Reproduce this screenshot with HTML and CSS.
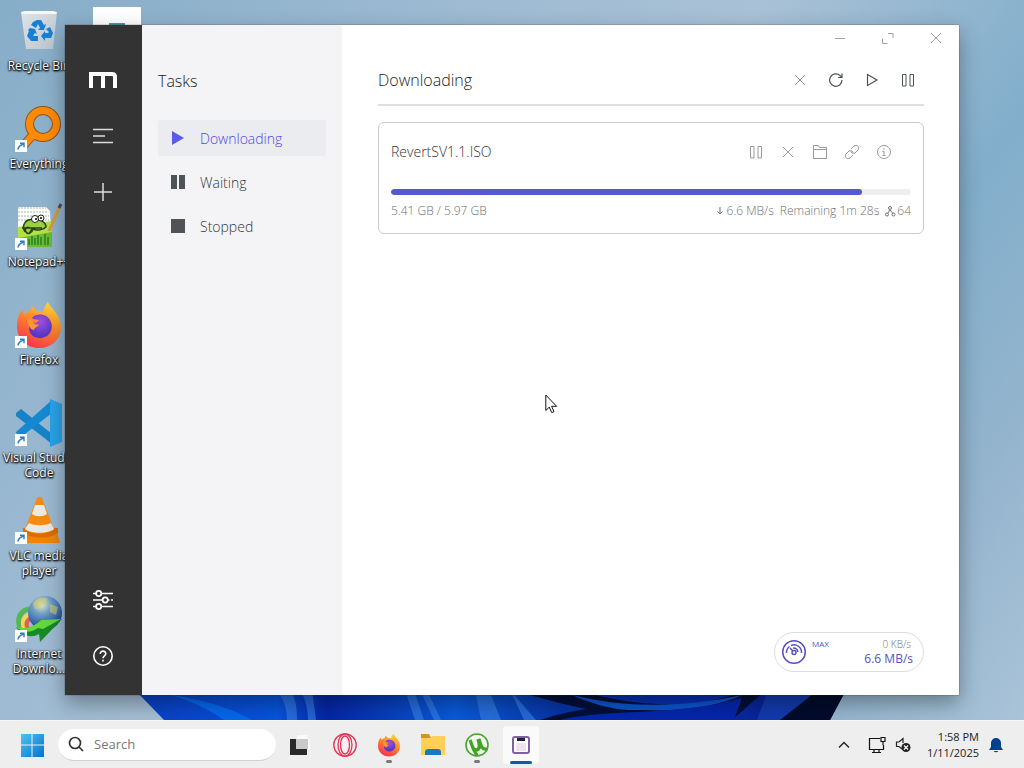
FILE: index.html
```html
<!DOCTYPE html>
<html lang="en">
<head>
<meta charset="utf-8">
<meta name="viewport" content="width=device-width, initial-scale=1">
<title>Downloading</title>
<link rel="stylesheet" href="styles.css">
</head>
<body>
<svg class="defs" aria-hidden="true">
  <defs>
    <linearGradient id="fire" x1="0.8" y1="0" x2="0.3" y2="1"><stop offset="0" stop-color="#ffe13d"/><stop offset=".45" stop-color="#ff8a2a"/><stop offset="1" stop-color="#f5314f"/></linearGradient>
    <radialGradient id="violet" cx=".5" cy=".3" r=".7"><stop offset="0" stop-color="#a44fe0"/><stop offset="1" stop-color="#4b35c0"/></radialGradient>
    <linearGradient id="win" x1="0" y1="0" x2="1" y2="1"><stop offset="0" stop-color="#4cc5f2"/><stop offset="1" stop-color="#0671cb"/></linearGradient>
    <linearGradient id="glass" x1="0" y1="0" x2="1" y2="1"><stop offset="0" stop-color="#dfe5e9"/><stop offset="1" stop-color="#b9c4cc"/></linearGradient>
    <radialGradient id="globe" cx=".4" cy=".25" r=".8"><stop offset="0" stop-color="#e6ecc0"/><stop offset=".35" stop-color="#6f9fc9"/><stop offset="1" stop-color="#123a86"/></radialGradient>
    <linearGradient id="bloomA" x1="0" x2="1"><stop offset="0" stop-color="#0a3fc4"/><stop offset=".2" stop-color="#0654dc"/><stop offset=".27" stop-color="#0526a4"/><stop offset=".45" stop-color="#0a5ad9"/><stop offset=".6" stop-color="#0634a6"/><stop offset=".8" stop-color="#0a2bb5"/><stop offset="1" stop-color="#061c6b"/></linearGradient>
    <symbol id="shortcut" viewBox="0 0 12 12"><path fill="#fff" d="M0 0h12v12H0z"/><path d="M3 9.500C3 7 4.500 5.500 8.500 4M5 3.200h4v4" fill="none" stroke="#2f7cb8" stroke-width="1.400"/></symbol>
    <symbol id="firefox" viewBox="0 0 48 48"><path fill="url(#fire)" d="M5 12l3-3 1 5c2-2 4-4 6-4l2-5 5 5c2 0 4 0 6 1 1-3 2-7 5-10 2 6 13 12 13 25 0 13-10 21-22 21S2 38 2 26c0-6 1-10 3-14z"/><path fill="url(#violet)" d="M17 17c3-5 14-5 18 2 5 9-1 18-10 18-7 0-11-5-11-10 0-3 1-5 3-6l4 1 3-3c-3 0-5-1-7-2z"/><path fill="#ff9435" d="M12 19c3-2 6 0 7 3 1 2 4 1 5 2-2 2-4 2-5 5-3 0-6-4-7-10z"/></symbol>
    <symbol id="close" viewBox="0 0 16 16"><path d="M3 3l10 10M13 3L3 13" fill="none" stroke="currentColor"/></symbol>
    <symbol id="pause" viewBox="0 0 16 16"><path d="M2.500 2.500h3.500v11.500H2.500zM10 2.500h3.500v11.500H10z" fill="none" stroke="currentColor"/></symbol>
  </defs>
</svg>
<div class="screen">
  <main class="desktop">
    <svg class="wallpaper" viewBox="0 0 1024 30" preserveAspectRatio="none" aria-hidden="true">
      <path fill="url(#bloomA)" d="M135 0h711l-16 30H164z"/>
      <path fill="#0568ec" d="M172 5c30 5 58 12 80 25h-28c-15-10-30-18-52-25z"/>
      <path fill="#3b82e8" d="M277 0h14c5 10 6 20 6 30h-10c0-12-4-22-10-30zM300 0h12l4 30h-8c0-12-3-22-8-30zM405 0h9l10 30h-9zM420 0h7l14 30h-7zM475 0h14l12 30h-20zM510 0l26 30h-12z" opacity=".6"/>
      <path fill="#021038" d="M512 0h66c52 16 115 22 170 0h18l-34 30H540c15-5 28-8 46-11-25-5-44-11-74-19z"/>
      <path fill="#0b55cf" d="M572 5c55 14 115 12 170 0-40 18-80 15-110 15-20 0-45-8-60-15z"/>
      <path fill="#0526ad" d="M560 30c45-12 115-3 182-22l-8 22z"/>
      <path fill="#123aad" d="M768 0h55l-38 30h-28z"/>
      <path fill="#020b2c" d="M818 0h28l-16 30h-50z"/>
    </svg>

    <ul class="shortcuts">
      <li class="shortcut">
        <svg viewBox="0 0 48 48"><path fill="url(#glass)" d="M6 5h36l-4 37H11z"/><path fill="#f5f7f8" d="M6 5l4-1h28l4 1-1 2H7z"/><g fill="#1680d8"><path d="M18 15l4-2h4l3 5 2-1-2 6h-6l2-2-2-4-2 4-5-3zM31 22l4-2 3 6-2 5h-6v3l-4-5 4-5v2h3l1-1zM15 21l5 1 2 5-2-1-2 3h5v5h-7l-4-5 2-5-1-1z"/></g></svg>
        <span>Recycle Bin</span>
      </li>
      <li class="shortcut">
        <svg viewBox="0 0 48 48"><path d="M18 30L7 42" stroke="#8f5416" stroke-width="9"/><circle cx="28" cy="19" r="13.500" fill="none" stroke="#8f5416" stroke-width="9"/><path d="M20 28L7 42" stroke="#ff8a08" stroke-width="7"/><circle cx="28" cy="19" r="13.500" fill="none" stroke="#ff8a08" stroke-width="7"/><use href="#shortcut" y="35" width="12" height="12"/></svg>
        <span>Everything</span>
      </li>
      <li class="shortcut">
        <svg viewBox="0 0 48 48"><path fill="#fbfcf5" d="M3 4h28l4 4 2 36H3z"/><path fill="#b5e04a" d="M3 24l33-6 1 26H3z"/><path fill="#6dbb2f" d="M3 35l34-6v15H3z"/><path d="M3 5h28M3 9h30M3 13h31M3 17h31" stroke="#a7b8c4" stroke-dasharray="2 1"/><path d="M10 29c-4-7 1-14 9-12 5-2 12 2 12 7-3 3-9 4-13 2-1 4-5 6-7 3s1-6 4-4M7 25h20M14 31l3-5" fill="#9bd13b" stroke="#26431a" stroke-width="1.500"/><circle cx="20" cy="16" r="3.500" fill="#fff" stroke="#222"/><circle cx="26" cy="15" r="3" fill="#fff" stroke="#222"/><circle cx="21" cy="16" r="1"/><circle cx="26" cy="15" r="1"/><path d="M14 42v-6M17 42v-9M20 42v-7M23 42V32M26 42v-8M30 42V31M33 42v-8" fill="none" stroke="#24822a" stroke-width="1.500"/><path d="M34 28L45 3" stroke="#d79b38" stroke-width="3"/><path d="M44 5l2-4" stroke="#474c63" stroke-width="3"/><use href="#shortcut" y="35" width="12" height="12"/></svg>
        <span>Notepad++</span>
      </li>
      <li class="shortcut">
        <svg viewBox="0 0 48 48"><use href="#firefox" width="48" height="48"/><use href="#shortcut" y="35" width="12" height="12"/></svg>
        <span>Firefox</span>
      </li>
      <li class="shortcut">
        <svg viewBox="0 0 48 48"><path fill="#1683c9" d="M1 14l5-4 31 25v10L1 17z"/><path fill="#1489d2" d="M1 33l36-32v13L6 38l-5-4z"/><path fill="#29a3e8" d="M35 0l12 5v38l-12 5z"/><use href="#shortcut" y="35" width="12" height="12"/></svg>
        <span>Visual Studio Code</span>
      </li>
      <li class="shortcut">
        <svg viewBox="0 0 48 48"><path fill="#f08408" d="M7 35h35l3 11H8z"/><path fill="#d96e02" d="M8 31h35v5c-9 6-25 6-35 0z"/><path fill="#f58b14" d="M22 1c1-2 4-2 5 0l12 31c-5 6-24 6-29 0z"/><path fill="#e9e9e6" d="M20 8h9l3 9c-4 3-11 3-15 0zM14 26c6 3 15 3 22 0l3 6c-6 5-23 5-29 0z"/><use href="#shortcut" y="35" width="12" height="12"/></svg>
        <span>VLC media player</span>
      </li>
      <li class="shortcut">
        <svg viewBox="0 0 48 48"><path d="M5 33c-5-14 6-22 15-18" fill="none" stroke="#53b94b" stroke-width="5"/><path d="M9 33c-4-10 4-16 12-13" fill="none" stroke="#f4d45c" stroke-width="4"/><path d="M13 34c-4-7 1-12 9-11" fill="none" stroke="#e85a4f" stroke-width="4"/><circle cx="30" cy="18" r="17" fill="url(#globe)"/><path fill="#d4c96b" d="M18 8c5-6 11-6 15-4-3 3-1 5-5 6s-3 5-8 4zM35 9l8 3-2 8-6-3z" opacity=".6"/><path fill="#168b25" d="M1 32c10 4 18 0 24-7l22-1-22 23-1-8c-9 5-17 1-23-7z"/><path fill="#65d83d" d="M1 32c12 3 20-2 25-7l20-1-18 10-5-1c-7 5-15 5-22-1z"/><use href="#shortcut" y="35" width="12" height="12"/></svg>
        <span>Internet Downlo...</span>
      </li>
      <li class="shortcut document">
        <svg viewBox="0 0 48 48"><path fill="#fff" d="M0 0h48v48H0z"/><path fill="#3f9bab" d="M16 16h16v14H16z"/></svg>
      </li>
    </ul>

    <section class="window" aria-label="Download manager">
      <nav class="rail" aria-label="Main">
        <a class="rail-item" href="#" aria-label="Home"><svg width="28" height="16" viewBox="0 0 28 16"><path fill="none" stroke="#fff" stroke-width="4" d="M2 16V2M0 2h23q3 0 3 3v11M14 2v14"/></svg></a>
        <button class="rail-item" aria-label="Tasks"><svg width="20" height="20" viewBox="0 0 20 20"><path fill="none" stroke="#ddd" stroke-width="1.500" d="M0 3.500h20M0 10h12M0 16.500h20"/></svg></button>
        <button class="rail-item" aria-label="Add task"><svg width="20" height="20" viewBox="0 0 20 20"><path fill="none" stroke="#ddd" stroke-width="1.500" d="M1 10h18M10 1v18"/></svg></button>
        <button class="rail-item rail-end" aria-label="Preferences"><svg width="20" height="20" viewBox="0 0 20 20"><g fill="none" stroke="#fff" stroke-width="1.700"><path d="M0 3.500h3M8.500 3.500H20M0 10h9.500M15 10h1.500M18 10h2M0 16.500h3M8.500 16.500H20"/><circle cx="5.700" cy="3.500" r="2.600"/><circle cx="12.200" cy="10" r="2.600"/><circle cx="5.700" cy="16.500" r="2.600"/></g></svg></button>
        <button class="rail-item" aria-label="Help"><svg width="20" height="20" viewBox="0 0 20 20"><g fill="none" stroke="#fff" stroke-width="1.600"><circle cx="10" cy="10" r="9.200"/><path d="M7.200 8c0-4 5.800-3.500 5.600-.2C12.700 10 10 9.700 10 12.300M10 13.800v1.700"/></g></svg></button>
      </nav>

      <aside class="tasks">
        <h2 class="heading">Tasks</h2>
        <nav class="task-nav" aria-label="Tasks">
          <a class="task-link active" href="#"><svg width="14" height="14" viewBox="0 0 14 14"><path fill="currentColor" d="M1 0l12 7-12 7z"/></svg>Downloading</a>
          <a class="task-link" href="#"><svg width="14" height="14" viewBox="0 0 14 14"><path fill="currentColor" d="M0 0h6v14H0zM8 0h6v14H8z"/></svg>Waiting</a>
          <a class="task-link" href="#"><svg width="14" height="14" viewBox="0 0 14 14"><path fill="currentColor" d="M0 0h14v14H0z"/></svg>Stopped</a>
        </nav>
      </aside>

      <div class="content">
        <div class="window-controls">
          <button aria-label="Minimize"><svg width="16" height="16" viewBox="0 0 16 16"><path stroke="currentColor" d="M3 8.500h10"/></svg></button>
          <button aria-label="Maximize"><svg width="16" height="16" viewBox="0 0 16 16"><path fill="none" stroke="currentColor" d="M8 3.500h5V8M2.500 8.500v5h5"/></svg></button>
          <button aria-label="Close"><svg width="16" height="16"><use href="#close"/></svg></button>
        </div>
        <header class="content-head">
          <h1 class="heading">Downloading</h1>
          <div class="toolbar">
            <button class="muted" aria-label="Delete selected"><svg width="16" height="16"><use href="#close"/></svg></button>
            <button aria-label="Refresh"><svg width="16" height="16" viewBox="0 0 16 16"><path fill="none" stroke="currentColor" stroke-width="1.200" d="M14 8a6.200 6.200 0 1 1-2-4.500l1.700 1.700M14 1.500v4h-4"/></svg></button>
            <button aria-label="Resume all"><svg width="16" height="16" viewBox="0 0 16 16"><path fill="none" stroke="currentColor" stroke-width="1.200" d="M3.500 2.500l9.500 5.500-9.500 5.500z"/></svg></button>
            <button aria-label="Pause all"><svg width="16" height="16"><use href="#pause"/></svg></button>
          </div>
        </header>

        <article class="card">
          <div class="card-top">
            <h3 class="file-name">RevertSV1.1.ISO</h3>
            <div class="card-actions">
              <button aria-label="Pause"><svg width="16" height="16"><use href="#pause"/></svg></button>
              <button aria-label="Delete"><svg width="16" height="16"><use href="#close"/></svg></button>
              <button aria-label="Open folder"><svg width="16" height="16" viewBox="0 0 16 16"><path fill="none" stroke="currentColor" d="M1.500 14.500v-13h5l1 2h7v11zM1.500 5.500h13"/></svg></button>
              <button aria-label="Copy link"><svg width="16" height="16" viewBox="0 0 16 16"><path fill="none" stroke="currentColor" d="M7 5l3-3c3-2 6 1 4 4l-3 3c-2 1-4 0-4-2M9 11l-3 3c-3 2-6-1-4-4l3-3c2-1 4 0 4 2"/></svg></button>
              <button aria-label="Information"><svg width="16" height="16" viewBox="0 0 16 16"><g fill="none" stroke="currentColor"><circle cx="8" cy="8" r="6.500"/><path d="M8 4v1.500M8 7v5M6.500 7.500H8M6.500 11.500h3"/></g></svg></button>
            </div>
          </div>
          <div class="progress" role="progressbar" aria-label="RevertSV1.1.ISO" aria-valuenow="91" aria-valuemin="0" aria-valuemax="100"><div class="progress-fill" style="width:90.6%"></div></div>
          <div class="stats">
            <span>5.41 GB / 5.97 GB</span>
            <div class="stats-live">
              <span class="stat"><svg width="8" height="10" viewBox="0 0 8 10"><path fill="none" stroke="currentColor" d="M4 1v7M1.500 5.500L4 8l2.500-2.500"/></svg>6.6 MB/s</span>
              <span>Remaining 1m 28s</span>
              <span class="stat connections"><svg width="11" height="11" viewBox="0 0 11 11"><g fill="none" stroke="currentColor"><circle cx="5" cy="2" r="1.500"/><circle cx="2" cy="8.500" r="1.500"/><circle cx="8.500" cy="8.500" r="1.500"/><path d="M5 3.500L3 7M5 4l3 3.500"/></g></svg>64</span>
            </div>
          </div>
        </article>

        <div class="speed">
          <svg width="26" height="26" viewBox="0 0 26 26"><g fill="none" stroke="currentColor" stroke-width="1.500"><circle cx="13" cy="13" r="11.300"/><path d="M5.500 14a7.500 7.500 0 0 1 3-6.500M10 6.500a7.500 7.500 0 0 1 10.500 7.500M9 9l3 3M12 9a5 5 0 0 1 5 4"/><circle cx="13" cy="13.500" r="2"/></g></svg>
          <span class="speed-mode">MAX</span>
          <div class="speed-values"><span class="up">0 KB/s</span><span class="down">6.6 MB/s</span></div>
        </div>
      </div>
    </section>
    <svg class="cursor" width="13" height="20" viewBox="0 0 13 20" aria-hidden="true"><path fill="#fff" stroke="#111" d="M.8 1v15.500l3.500-3.400 2.400 5.500 2.300-1-2.400-5.300h5z"/></svg>
  </main>

  <footer class="taskbar">
    <div class="taskbar-start">
      <button class="start" aria-label="Start"><svg width="24" height="24" viewBox="0 0 24 24"><path fill="url(#win)" d="M1 1h10.500v10.500H1zM12.500 1H24v10.500H12.500zM1 12.500h10.500V24H1zM12.500 12.500H24V24H12.500z"/></svg></button>
      <label class="search"><svg width="16" height="16" viewBox="0 0 16 16"><g fill="none" stroke="#333" stroke-width="1.700"><circle cx="7" cy="7" r="5.500"/><path d="M11 11l4 4"/></g></svg><input type="search" placeholder="Search" aria-label="Search"></label>
      <div class="apps">
        <button class="app" aria-label="Task view"><svg width="24" height="24" viewBox="0 0 24 24"><path fill="#fafafa" d="M8 2h11v4h2v10h-3V6H8z"/><path fill="#292929" d="M1 6h17v16H1z"/><path fill="#c9c9c9" d="M7 6h12v10H7z"/></svg></button>
        <button class="app" aria-label="Opera"><svg width="24" height="24" viewBox="0 0 24 24"><g fill="#fbeef1" stroke="#df3354" stroke-width="1.300"><circle cx="12" cy="12" r="11.200"/><ellipse cx="12" cy="12" rx="7" ry="11"/><ellipse cx="12" cy="12" rx="4.500" ry="9"/></g></svg></button>
        <button class="app running" aria-label="Firefox"><svg width="24" height="24"><use href="#firefox"/></svg></button>
        <button class="app" aria-label="File Explorer"><svg width="24" height="24" viewBox="0 0 24 24"><path fill="#d59419" d="M0 1h8l2 4H0z"/><path fill="#ffcf58" d="M0 5h9l3-2h12v19H0z"/><path fill="#137bc4" d="M4 22v-3q0-3 3-3h10q3 0 3 3v3z"/></svg></button>
        <button class="app running" aria-label="uTorrent"><svg width="24" height="24" viewBox="0 0 24 24"><circle cx="12" cy="12" r="11" fill="#f2f9ed" stroke="#48a42c" stroke-width="1.600"/><path fill="none" stroke="#42a325" stroke-width="3.300" d="M5 7c2 4 2 10 6 10 4 0 4-5 2-11M14 6c2 6 2 11 8 10M8 15c1 3 3 5 4 8"/></svg></button>
        <button class="app current" aria-label="Download manager"><svg width="24" height="24" viewBox="0 0 24 24"><rect x="4" y="4" width="16" height="16" rx="2" fill="#fff" stroke="#8060a5" stroke-width="2"/><path fill="#25202f" d="M8 5h8v3H8z"/><path fill="#eee2ef" d="M7 10h10v8H7z"/></svg></button>
      </div>
    </div>
    <div class="tray">
      <button class="tray-item" aria-label="Show hidden icons"><svg width="12" height="12" viewBox="0 0 12 12"><path fill="none" stroke="#222" stroke-width="1.400" d="M1 8.500l5-5 5 5"/></svg></button>
      <button class="tray-item" aria-label="Network"><svg width="18" height="18" viewBox="0 0 18 18"><path fill="none" stroke="#111" stroke-width="1.200" d="M12 2.500H1.500v11h14V9M6 13.500V16M11 13.500V16M4 16.500h9M13 1.500h4v4h-4zM15 5.500V9"/></svg></button>
      <button class="tray-item" aria-label="Volume muted"><svg width="16" height="16" viewBox="0 0 16 16"><path fill="none" stroke="#222" stroke-width="1.200" d="M7 12L4 9.500H1.500V5H4l4-3.500V6"/><circle cx="11" cy="10.500" r="4.500" fill="#222"/><path stroke="#fff" stroke-width="1.200" d="M9 8.500l4 4M13 8.500l-4 4"/></svg></button>
      <time class="clock" datetime="2025-01-11T13:58">1:58 PM<br>1/11/2025</time>
      <button class="tray-item" aria-label="Notifications"><svg width="16" height="16" viewBox="0 0 16 16"><path fill="#003f92" d="M3 6a5 5 0 0 1 10 0v4l2 3H1l2-3zM5.500 14h5q-2.500 2.500-5 0z"/></svg></button>
    </div>
  </footer>
</div>
</body>
</html>
```
FILE: styles.css
```css
* { box-sizing: border-box; }
body { margin: 0; font-family: "Open Sans", "Noto Sans", sans-serif; font-size: 14px; font-weight: 300; color: #222; }
button { padding: 0; border: 0; background: none; font: inherit; color: inherit; display: grid; place-items: center; }
a { color: inherit; text-decoration: none; }
h1, h2, h3, ul { margin: 0; padding: 0; font-weight: 300; }
svg { display: block; flex: none; }
.defs { position: absolute; width: 0; height: 0; }

.screen { height: 100vh; display: grid; grid-template-rows: 1fr 48px; }
.desktop { position: relative; overflow: hidden; background: linear-gradient(125deg, #86adc8 0%, #9dbad2 30%, #a9c1d6 50%, #82aecb 72%, #94b4cd 86%, #a9c3d8 100%); }
.wallpaper { position: absolute; left: 0; bottom: 0; width: 100%; height: 30px; }

.shortcuts { list-style: none; height: 100%; width: 156px; display: grid; grid-template-rows: repeat(7, 98px); grid-template-columns: 78px 78px; grid-auto-flow: column; }
.shortcut { padding-top: 7px; display: flex; flex-direction: column; align-items: center; gap: 3px; color: #fff; font-size: 12px; font-weight: 400; line-height: 15px; text-align: center; text-shadow: 0 1px 2px #000, 1px 1px 2px #000, 0 0 2px #000; }
.shortcut svg { width: 48px; height: 48px; }

.window { position: absolute; inset: 25px 65px; display: grid; grid-template-columns: 77px 200px 1fr; background: #fff; box-shadow: 0 0 1px #333, 0 8px 20px rgba(0, 0, 0, .35); }
.rail { background: #333; padding: 27px 1px 11px 0; display: flex; flex-direction: column; }
.rail-item { height: 56px; display: grid; place-items: center; }
.rail-end { margin-top: auto; }

.heading { font-size: 16px; line-height: 24px; }
.tasks { background: #f4f4f6; padding: 44px 16px; }
.task-nav { margin-top: 27px; display: flex; flex-direction: column; gap: 8px; }
.task-link { height: 36px; padding: 0 13px; display: flex; align-items: center; gap: 15px; border-radius: 3px; color: #33363b; }
.task-link svg { color: #4d5357; }
.task-link.active { background: #eaecf0; color: #4d49e0; }
.task-link.active svg { color: #5b5bea; }

.content { padding: 0 35px 23px 36px; display: flex; flex-direction: column; min-width: 0; }
.window-controls { height: 26px; margin-right: -36px; display: flex; justify-content: flex-end; color: #a0a0a0; }
.window-controls button { width: 48px; }
.content-head { height: 55px; padding-top: 4px; border-bottom: 2px solid #dfdfe1; display: flex; align-items: center; justify-content: space-between; }
.toolbar { display: flex; gap: 12px; padding-right: 4px; color: #4d515a; }
.toolbar button { width: 24px; height: 24px; }
.toolbar .muted { color: #999; }

.card { margin-top: 16px; padding: 17px 12px 14px; border: 1px solid #ccc; border-radius: 6px; }
.card-top { display: flex; align-items: center; justify-content: space-between; }
.file-name { font-size: 14px; line-height: 24px; color: #333; }
.card-actions { display: flex; padding-right: 11px; color: #999; }
.card-actions button { width: 32px; height: 24px; }
.progress { margin-top: 25px; height: 6px; border-radius: 3px; background: #eee; overflow: hidden; }
.progress-fill { height: 100%; border-radius: 3px; background: #5659cf; }
.stats { margin-top: 8px; display: flex; justify-content: space-between; font-size: 12px; line-height: 16px; color: #6e7074; }
.stats-live { display: flex; gap: 6px; }
.stat { display: flex; align-items: center; gap: 3px; }
.connections { gap: 1px; }

.speed { margin-top: auto; align-self: flex-end; width: 150px; height: 40px; padding: 0 10px 0 6px; display: flex; gap: 5px; align-items: center; border: 1px solid #ddd; border-radius: 20px; color: #574fc4; }
.speed-mode { align-self: flex-start; margin-top: 5px; font-size: 8px; font-weight: 400; line-height: 12px; }
.speed-values { margin-left: auto; display: flex; flex-direction: column; align-items: flex-end; }
.up { padding-right: 2px; font-size: 10px; line-height: 14px; color: #6e7074; }
.down { font-size: 12px; font-weight: 400; line-height: 16px; }
.cursor { position: absolute; left: 545px; top: 394px; }

.taskbar { padding: 0 20px; background: #eee; border-top: 1px solid #f8f8f8; display: flex; align-items: center; justify-content: space-between; }
.taskbar-start, .apps, .tray { display: flex; align-items: center; }
.search { margin-left: 14px; width: 218px; height: 32px; padding: 0 10px; display: flex; align-items: center; gap: 10px; border-radius: 16px; background: #fff; border-bottom: 1px solid #d2d2d2; }
.search input { min-width: 0; flex: 1; padding: 0; border: 0; outline: 0; background: none; font: inherit; font-size: 13px; font-weight: 400; }
.search input::placeholder { color: #777; opacity: 1; }
.apps { margin-left: 3px; }
.app { width: 44px; height: 47px; position: relative; }
.running::after, .current::after { content: ""; position: absolute; bottom: 5px; width: 6px; height: 3px; border-radius: 2px; background: #777; }
.current { width: 36px; height: 38px; margin: 0 4px; background: #fafafa; border-radius: 4px; }
.current::after { bottom: 0; width: 22px; background: #075fa8; }
.tray { gap: 9px; }
.tray-item:first-child { margin-right: 9px; }
.clock { margin-left: 7px; font-size: 11px; font-weight: 400; line-height: 16px; text-align: right; color: #222; }
```
